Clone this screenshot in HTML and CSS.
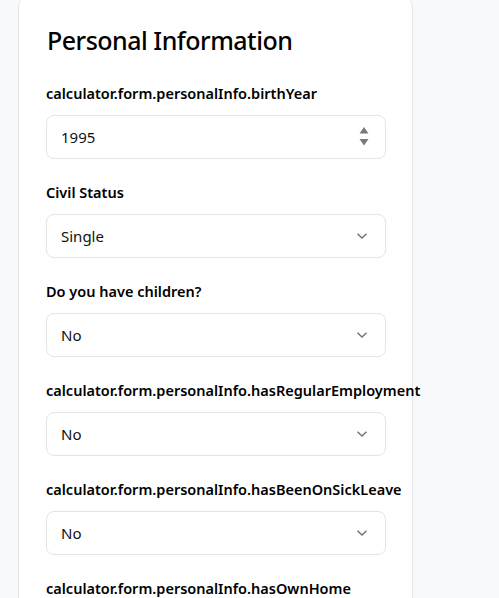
FILE: index.html
```html
<!DOCTYPE html>
<html lang="en">
<head>
<meta charset="utf-8">
<title>Personal Information</title>
<link rel="stylesheet" href="styles.css">
</head>
<body>
<div class="card">
  <h2 class="title">Personal Information</h2>
  <div class="field">
    <label class="label">calculator.form.personalInfo.birthYear</label>
    <div class="control">
      <span class="value">1995</span>
      <svg class="spin" width="10" height="22" viewBox="0 0 10 22"><path d="M5 1 L9.5 7.5 L0.5 7.5 Z" fill="#7a7a7a"/><path d="M0.5 13 L9.5 13 L5 19.5 Z" fill="#7a7a7a"/></svg>
    </div>
  </div>
  <div class="field">
    <label class="label">Civil Status</label>
    <div class="control">
      <span class="value">Single</span>
      <svg class="chev" width="12" height="8" viewBox="0 0 12 8"><path d="M1.5 1.8 L6 6 L10.5 1.8" fill="none" stroke="#6b7280" stroke-width="1.4"/></svg>
    </div>
  </div>
  <div class="field">
    <label class="label">Do you have children?</label>
    <div class="control">
      <span class="value">No</span>
      <svg class="chev" width="12" height="8" viewBox="0 0 12 8"><path d="M1.5 1.8 L6 6 L10.5 1.8" fill="none" stroke="#6b7280" stroke-width="1.4"/></svg>
    </div>
  </div>
  <div class="field">
    <label class="label">calculator.form.personalInfo.hasRegularEmployment</label>
    <div class="control">
      <span class="value">No</span>
      <svg class="chev" width="12" height="8" viewBox="0 0 12 8"><path d="M1.5 1.8 L6 6 L10.5 1.8" fill="none" stroke="#6b7280" stroke-width="1.4"/></svg>
    </div>
  </div>
  <div class="field">
    <label class="label">calculator.form.personalInfo.hasBeenOnSickLeave</label>
    <div class="control">
      <span class="value">No</span>
      <svg class="chev" width="12" height="8" viewBox="0 0 12 8"><path d="M1.5 1.8 L6 6 L10.5 1.8" fill="none" stroke="#6b7280" stroke-width="1.4"/></svg>
    </div>
  </div>
  <div class="field">
    <label class="label">calculator.form.personalInfo.hasOwnHome</label>
    <div class="control">
      <span class="value">No</span>
      <svg class="chev" width="12" height="8" viewBox="0 0 12 8"><path d="M1.5 1.8 L6 6 L10.5 1.8" fill="none" stroke="#6b7280" stroke-width="1.4"/></svg>
    </div>
  </div>
</div>
</body>
</html>
```
FILE: styles.css
```css
html, body {
  margin: 0;
  padding: 0;
  background: #f8f9fb;
  font-family: "Noto Sans", "Open Sans", sans-serif;
  color: #111;
  overflow: hidden;
}
.card {
  box-sizing: border-box;
  width: 395px;
  margin: -5px 0 0 18px;
  background: #fff;
  border: 1px solid #e5e7eb;
  border-radius: 12px;
  padding: 27px 27px 40px 27px;
}
.title {
  margin: 0 0 25px 1px;
  font-size: 25px;
  font-weight: 500;
  letter-spacing: -0.5px;
  line-height: 34px;
  color: #000;
}
.field {
  display: flex;
  flex-direction: column;
  gap: 11px;
  margin-bottom: 22px;
}
.label {
  font-size: 14.5px;
  font-weight: 600;
  line-height: 22px;
  white-space: nowrap;
  color: #000;
}
.control {
  box-sizing: border-box;
  height: 44px;
  width: 340px;
  border: 1px solid #e2e4e8;
  border-radius: 8px;
  display: flex;
  align-items: center;
  justify-content: space-between;
  padding: 0 17px 0 14px;
  font-size: 15px;
  color: #111;
}
.spin { margin-right: -1px; }
```
